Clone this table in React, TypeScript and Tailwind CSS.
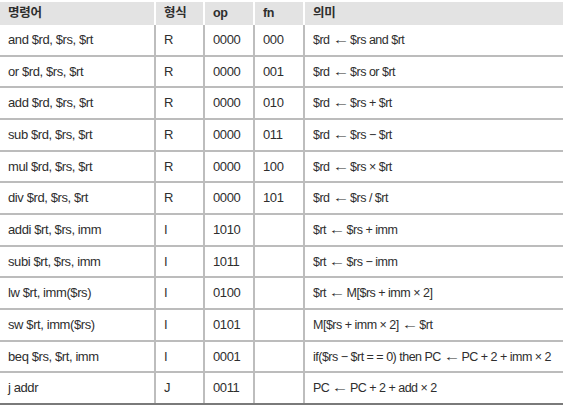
const rows: [string, string, string, string, string][] = [
  ["and $rd, $rs, $rt", "R", "0000", "000", "$rd ← $rs and $rt"],
  ["or $rd, $rs, $rt", "R", "0000", "001", "$rd ← $rs or $rt"],
  ["add $rd, $rs, $rt", "R", "0000", "010", "$rd ← $rs + $rt"],
  ["sub $rd, $rs, $rt", "R", "0000", "011", "$rd ← $rs − $rt"],
  ["mul $rd, $rs, $rt", "R", "0000", "100", "$rd ← $rs × $rt"],
  ["div $rd, $rs, $rt", "R", "0000", "101", "$rd ← $rs / $rt"],
  ["addi $rt, $rs, imm", "I", "1010", "", "$rt ← $rs + imm"],
  ["subi $rt, $rs, imm", "I", "1011", "", "$rt ← $rs − imm"],
  ["lw $rt, imm($rs)", "I", "0100", "", "$rt ← M[$rs + imm × 2]"],
  ["sw $rt, imm($rs)", "I", "0101", "", "M[$rs + imm × 2] ← $rt"],
  ["beq $rs, $rt, imm", "I", "0001", "", "if($rs − $rt = = 0) then PC ← PC + 2 + imm × 2"],
  ["j addr", "J", "0011", "", "PC ← PC + 2 + add × 2"],
]

const cols = ["w-[154px]", "w-[49px]", "w-[50px]", "w-[50px]", "flex-1"]

// arrows in the source are long and thin, draw them a bit wider
function Meaning({ text }: { text: string }) {
  const parts = text.split(" ← ")
  return (
    <span>
      {parts.map((p, i) => (
        <span key={i}>
          {p}
          {i < parts.length - 1 && <span className="inline-block scale-x-[1.3] text-[13px] mx-[4px]">←</span>}
        </span>
      ))}
    </span>
  )
}

export default function App() {
  return (
    <div
      className="w-[563px] h-[409px] bg-white pt-[2px] text-[#2e2e2e] overflow-hidden"
      style={{ fontFamily: '"Liberation Sans", "Noto Sans CJK KR", sans-serif' }}
    >
      {/* header */}
      <div className="flex h-[23px] bg-[#e3e3e3] text-[12.5px] font-bold tracking-[-0.3px]">
        {["명령어", "형식", "op", "fn", "의미"].map((h, i) => (
          <div
            key={h}
            className={`${cols[i]} flex items-center pl-[8px] ${i > 0 ? "border-l-2 border-white" : ""}`}
          >
            {h}
          </div>
        ))}
      </div>

      {/* body */}
      {rows.map((r, ri) => (
        <div
          key={ri}
          className={`flex h-[31.67px] text-[13px] tracking-[-0.4px] ${
            ri < rows.length - 1 ? "border-b-2 border-[#bcbcbc]" : "border-b-2 border-[#7a7a7a]"
          }`}
        >
          {r.map((c, i) => (
            <div
              key={i}
              className={`${cols[i]} flex items-center pl-[8px] whitespace-nowrap ${
                i > 0 ? "border-l-2 border-[#bdbdbd]" : ""
              } ${i === 4 ? "text-[12.5px] tracking-[-0.5px]" : ""}`}
            >
              {i === 4 ? <Meaning text={c} /> : c}
            </div>
          ))}
        </div>
      ))}
    </div>
  )
}
